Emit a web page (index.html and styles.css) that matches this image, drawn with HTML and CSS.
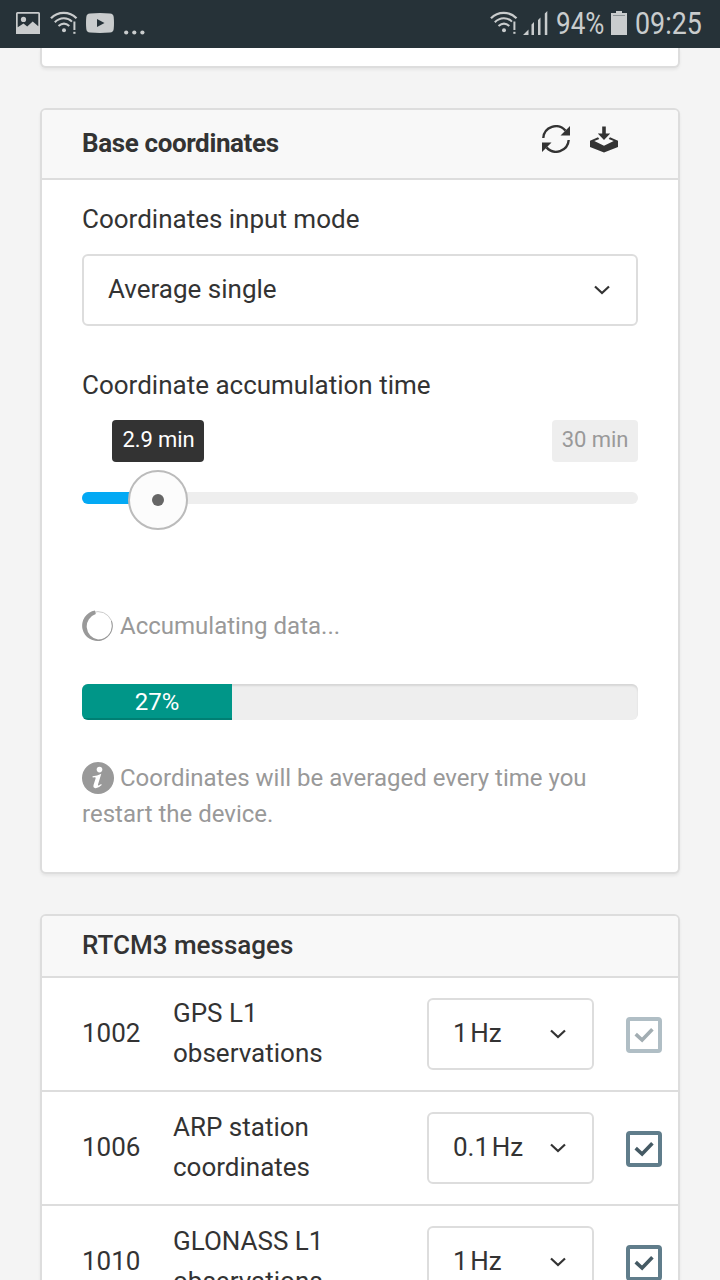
FILE: index.html
```html
<!DOCTYPE html>
<html lang="en">
<head>
<meta charset="utf-8">
<title>Base mode</title>
<link rel="stylesheet" href="styles.css">
</head>
<body>
<svg class="defs" width="0" height="0" aria-hidden="true">
  <symbol id="wifi" viewBox="0 0 28 24">
    <g fill="none" stroke="currentColor" stroke-width="2">
      <path d="M1 7.2C8 0 19.5 0 26.5 7.2" stroke-width="2.300"/>
      <path d="M4.800 11.200C10 6 17.500 6 22 10.600"/>
      <path d="M8.500 15C12 12 16 12 19.300 15"/>
      <path d="M24.400 10.500V19"/>
    </g>
    <circle cx="14" cy="19.200" r="2" fill="currentColor"/>
    <rect x="23.300" y="20.800" width="2.200" height="2" fill="currentColor"/>
  </symbol>
  <symbol id="chevron" viewBox="0 0 16 10">
    <path d="M1 1.500l7 6.500 7-6.500" fill="none" stroke="currentColor" stroke-width="2.200"/>
  </symbol>
  <symbol id="check" viewBox="0 0 20 16">
    <path d="M1.700 7.200l6.400 5.800L18.400 2.200" fill="none" stroke="currentColor" stroke-width="3.600"/>
  </symbol>
</svg>

<header class="status">
  <svg class="status-image" viewBox="0 0 24 22"><path fill="currentColor" fill-rule="evenodd" d="M1.500 0h21A1.500 1.500 0 0 1 24 1.500V22H0V1.500A1.500 1.500 0 0 1 1.500 0zM1.700 1.700v13.600l5.800-3.800 3.700 3 5.500-5 5.600 4.700V1.700z"/><circle cx="7.500" cy="7.400" r="2.600" fill="currentColor"/></svg>
  <svg class="status-wifi"><use href="#wifi"/></svg>
  <svg class="status-video" viewBox="0 0 28 20"><path fill="currentColor" fill-rule="evenodd" d="M4 .5Q14-.4 24 .5q3.400.3 3.700 3.500.6 6 0 12-.3 3.200-3.700 3.500-10 .9-20 0Q.6 19.200.3 16-.3 10 .3 4 .6.8 4 .5zM11 6v8l7.500-4z"/></svg>
  <svg class="status-more" viewBox="0 0 21 5" fill="currentColor"><circle cx="2.200" cy="2.500" r="2.100"/><circle cx="10.300" cy="2.500" r="2.100"/><circle cx="18.400" cy="2.500" r="2.100"/></svg>
  <div class="status-right">
    <svg class="status-wifi"><use href="#wifi"/></svg>
    <svg class="status-signal" viewBox="0 0 25 24" fill="currentColor"><path d="M0 24l5.500-5.500V24zM8.500 13.500l2.500-2.500v13H8.500zM15 9l2.500-2.500V24H15zM21.800 2.500L24.300 0v24h-2.500z"/></svg>
    <span class="status-level"><span>94%</span></span>
    <svg class="status-battery" viewBox="0 0 16 24"><path fill="currentColor" d="M5 0h6v2h5v22H0V2h5z"/><path d="M2 4.500h12" stroke="#8c9396"/></svg>
    <span class="status-time"><span>09:25</span></span>
  </div>
</header>

<main class="page">
  <section class="card card-previous"></section>

  <section class="card card-base">
    <div class="card-head">
      <h2 class="title title-base">Base coordinates</h2>
      <div class="actions">
        <svg class="action" viewBox="0 0 28 28"><g fill="none" stroke="currentColor" stroke-width="2.400"><path d="M1.300 13A12.700 12.700 0 0 1 23.500 5.600"/><path d="M26.700 15A12.700 12.700 0 0 1 4.500 22.400"/></g><path fill="currentColor" d="M28 1v9.500h-9.500zM0 27v-9.500h9.500z"/></svg>
        <svg class="action" viewBox="0 0 28 28"><path fill="currentColor" d="M12.200 1.500h3.600v7h4.400L14 15 7.800 8.500h4.400zM8 12.300l1.300 1.600-5 2.100L14 20.700l9.700-4.700-5-2.100 1.300-1.600 8 3.400V22l-14 5.500L0 22v-6.300z"/></svg>
      </div>
    </div>
    <div class="card-body">
      <label class="label">Coordinates input mode</label>
      <div class="select select-mode"><span>Average single</span><svg class="chevron"><use href="#chevron"/></svg></div>
      <label class="label label-time">Coordinate accumulation time</label>
      <div class="tips"><span class="tip tip-now">2.9 min</span><span class="tip tip-max">30 min</span></div>
      <div class="slider"><div class="track"><div class="fill"></div></div><div class="knob"></div></div>
      <div class="note note-wait">
        <svg class="spinner" viewBox="0 0 32 32"><circle cx="16" cy="16" r="14.400" fill="none" stroke="#ccc" stroke-width="1"/><path fill="currentColor" d="M13 .6L13.800 3.900A13.200 13.200 0 0 0 16 29.500 13.800 13.800 0 0 0 29 11l.9-.3A15.300 15.300 0 1 1 13 .6z"/></svg>
        <span class="note-loading">Accumulating data...</span>
      </div>
      <div class="progress"><div class="bar">27%</div></div>
      <p class="note note-info"><svg class="info" viewBox="0 0 32 32"><circle cx="16" cy="16" r="16" fill="currentColor"/><circle cx="17.500" cy="7.600" r="2.800" fill="#fff"/><path fill="#fff" d="M10.500 14.300q4.800-.6 8.800-2.600l-3.300 10.900q-.3 1.300.7.900l2.500-1.500.5 1q-3.300 3.400-6.300 3.200-2.700-.3-1.800-3.400l2-6.300q.3-1.200-.7-1.200l-2.200.1z"/></svg>Coordinates will be averaged every time you restart the device.</p>
    </div>
  </section>

  <section class="card card-messages">
    <div class="card-head card-head-short"><h2 class="title title-messages">RTCM3 messages</h2></div>
    <div class="row"><span class="code">1002</span><span class="name">GPS L1 observations</span><div class="select select-rate"><span>1&#8202;Hz</span><svg class="chevron"><use href="#chevron"/></svg></div><span class="box box-off"><svg><use href="#check"/></svg></span></div>
    <div class="row"><span class="code">1006</span><span class="name">ARP station coordinates</span><div class="select select-rate"><span>0.1&#8202;Hz</span><svg class="chevron"><use href="#chevron"/></svg></div><span class="box"><svg><use href="#check"/></svg></span></div>
    <div class="row"><span class="code">1010</span><span class="name">GLONASS L1 observations</span><div class="select select-rate"><span>1&#8202;Hz</span><svg class="chevron"><use href="#chevron"/></svg></div><span class="box"><svg><use href="#check"/></svg></span></div>
  </section>
</main>
</body>
</html>
```
FILE: styles.css
```css
* { box-sizing: border-box; }
body { margin: 0; height: 1280px; overflow: hidden; background: #f4f4f4; color: #333; font: 26px/40px Roboto, "Liberation Sans", sans-serif; }
svg { display: block; flex: none; }
.defs { position: absolute; }

.status { height: 48px; padding: 0 18px 0 16px; display: flex; align-items: flex-start; background: #263238; color: #c9cccd; }
.status-image { width: 24px; height: 22px; margin-top: 12px; }
.status-wifi { width: 28px; height: 24px; margin: 11px 0 0 10px; }
.status-video { width: 28px; height: 20px; margin: 13px 0 0 8px; }
.status-more { width: 21px; height: 5px; margin: 30px 0 0 10px; }
.status-right { display: flex; margin-left: auto; }
.status-signal { width: 25px; height: 24px; margin: 11px 0 0 5px; }
.status-level, .status-time { font-size: 31px; line-height: 48px; white-space: nowrap; }
.status-level { width: 48px; margin-left: 8px; }
.status-time { width: 67px; margin-left: 8px; }
.status-level span, .status-time span { display: inline-block; transform: scaleX(.84); transform-origin: left; }
.status-time span { transform: scaleX(.865); }
.status-battery { width: 16px; height: 24px; margin: 11px 0 0 7px; }

.page { display: flex; flex-direction: column; gap: 40px; padding: 0 40px; }
.card { background: #fff; border: 2px solid #ddd; border-radius: 6px; box-shadow: 0 2px 3px rgba(0,0,0,.06); overflow: hidden; flex: none; }
.card-previous { height: 20px; border-top: 0; border-radius: 0 0 6px 6px; }
.card-base { height: 766px; }
.card-head { height: 70px; display: flex; justify-content: space-between; padding: 0 60px 0 40px; background: #f8f8f8; border-bottom: 2px solid #ddd; }
.card-head-short { height: 62px; }
.title { margin: 0; font-size: 26px; font-weight: 500; line-height: 58px; }
.title-base { font-weight: 700; line-height: 66px; letter-spacing: -.38px; }
.actions { display: flex; gap: 20px; padding-top: 15px; }
.action { width: 28px; height: 28px; }
.card-body { padding: 19px 40px 0; }
.label { display: block; }
.label-time { margin-top: 39px; }
.select { display: flex; align-items: center; justify-content: space-between; height: 72px; border: 2px solid #ddd; border-radius: 6px; padding: 0 26px 2px 24px; white-space: nowrap; }
.select-mode { margin-top: 15px; }
.chevron { width: 16px; height: 10px; margin-top: 2px; }
.tips { display: flex; justify-content: space-between; margin-top: 15px; padding-left: 30px; }
.tip { height: 42px; line-height: 40px; border-radius: 4px; font-size: 22px; text-align: center; }
.tip-now { width: 92px; padding-left: 1px; background: #333; color: #fff; letter-spacing: -.1px; }
.tip-max { width: 86px; background: #eee; color: #999; letter-spacing: -.1px; }
.slider { display: grid; align-items: center; height: 60px; margin-top: 8px; }
.track, .knob { grid-area: 1 / 1; }
.track { height: 12px; margin-bottom: 4px; border-radius: 6px; background: #eee; overflow: hidden; }
.fill { width: 76px; height: 12px; background: #03a9f4; }
.knob { display: grid; place-items: center; width: 60px; height: 60px; margin-left: 46px; border: 2px solid #bbb; border-radius: 50%; background: #fcfcfc; z-index: 1; }
.knob::after { content: ""; width: 12px; height: 12px; border-radius: 50%; background: #666; }
.note { color: #999; font-size: 24px; line-height: 36px; }
.note-wait { display: flex; align-items: center; gap: 6px; margin-top: 78px; }
.spinner { width: 32px; height: 32px; }
.progress { height: 36px; margin-top: 40px; border-radius: 6px; overflow: hidden; background: #eee; box-shadow: inset 0 2px 2px rgba(0,0,0,.1); }
.bar { width: 27%; height: 36px; background: #009688; box-shadow: inset 0 -2px 0 rgba(0,0,0,.15); color: #fff; font-size: 24px; line-height: 36px; text-align: center; }
.note-info { margin: 40px 0 0; }
.info { display: inline-block; width: 32px; height: 32px; margin-right: 6px; vertical-align: -8px; }

.row { display: flex; height: 114px; padding: 15px 16px 0 40px; border-bottom: 2px solid #ddd; }
.code { width: 91px; padding-top: 20px; }
.name { width: 200px; }
.select-rate { width: 167px; margin: 5px 0 0 54px; }
.box { display: grid; place-items: center; width: 36px; height: 36px; margin: 24px 0 0 auto; border: 4px solid #607d8b; border-radius: 4px; color: #455a64; }
.box svg { width: 20px; height: 16px; }
.box-off { border-color: #b0bec5; color: #a2adb2; }
```
